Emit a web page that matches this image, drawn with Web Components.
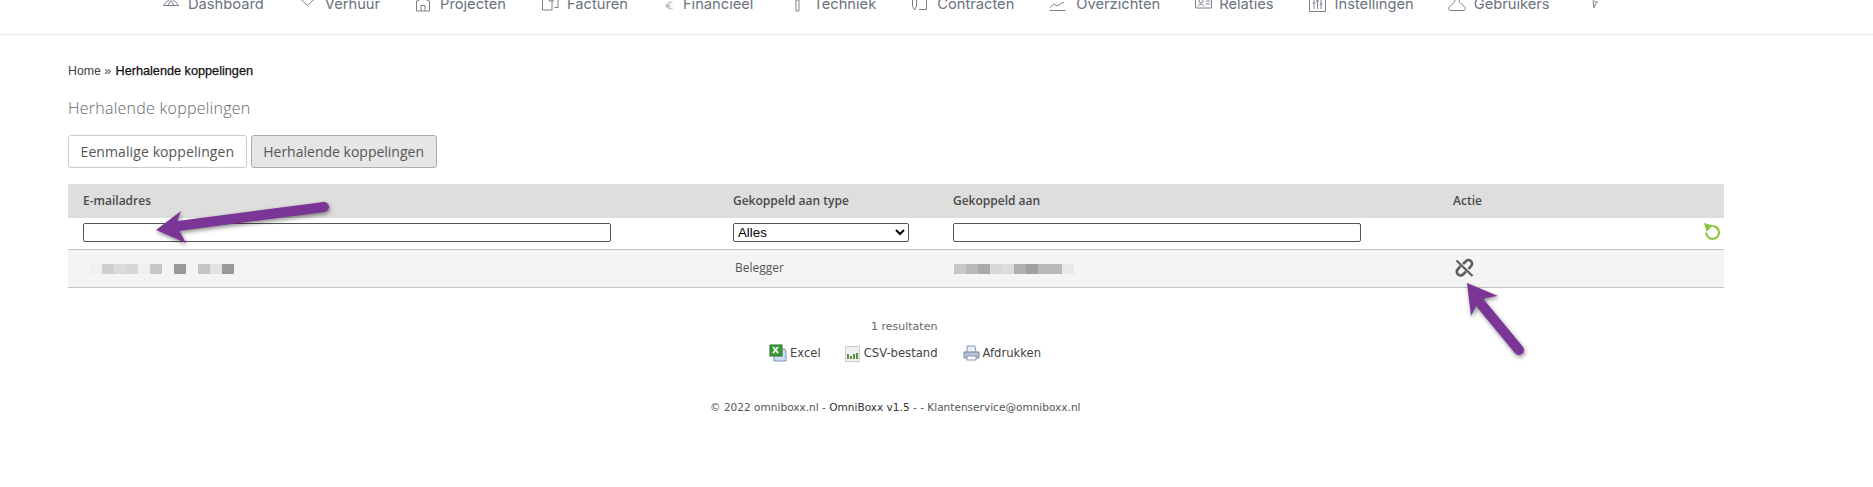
<!DOCTYPE html>
<html><head><meta charset="utf-8">
<style>
html,body{margin:0;padding:0;background:#fff;}
body{width:1873px;height:487px;overflow:hidden;position:relative;font-family:"Open Sans",sans-serif;}
</style></head>
<body>
<app-page></app-page>
<template id="nav-tpl">
<style>
:host{display:block;height:34px;border-bottom:1px solid #e8e9eb;overflow:hidden;}
.row{display:flex;margin-top:-6px;padding-left:163px;gap:35px;}
</style>
<div class="row"><slot></slot></div>
</template>
<template id="nav-item-tpl">
<style>
:host{display:flex;align-items:center;gap:9px;height:20px;font:14.7px/20px Inter,sans-serif;color:#6b7280;white-space:nowrap;}
::slotted(svg){flex:none;fill:none;stroke:#7c828d;stroke-width:1;overflow:visible;}
</style>
<slot name="icon"></slot><slot></slot>
</template>
<template id="tab-tpl">
<style>
:host{display:block;box-sizing:border-box;height:33px;padding:0 11.5px;border:1px solid #ccc;border-radius:3px;background:#fff;color:#555;font:14px/31px "Open Sans",sans-serif;letter-spacing:.1px;white-space:nowrap;}
:host([active]){background:#e6e6e6;border-color:#adadad;letter-spacing:0;}
</style><slot></slot>
</template>
<template id="mosaic-tpl">
<style>:host{display:flex;height:10px;margin-top:1px;}i{display:block;width:12px;height:10px;}</style>
</template>
<template id="grid-row-tpl">
<style>
:host{display:grid;grid-template-columns:650px 220px 500px 286px;box-sizing:border-box;align-items:center;}
</style><slot></slot>
</template>
<template id="cell-tpl">
<style>:host{display:block;padding-left:15px;position:relative;}</style><slot></slot>
</template>
<script>
function tplClass(id, setup){
  return class extends HTMLElement{
    constructor(){super();const r=this.attachShadow({mode:'open'});r.appendChild(document.getElementById(id).content.cloneNode(true));if(setup)setup(this,r);}
  };
}
customElements.define('top-nav',tplClass('nav-tpl'));
customElements.define('nav-item',tplClass('nav-item-tpl'));
customElements.define('tab-button',tplClass('tab-tpl'));
customElements.define('grid-row',tplClass('grid-row-tpl'));
customElements.define('grid-cell',tplClass('cell-tpl'));
customElements.define('blur-mosaic',tplClass('mosaic-tpl',(el,r)=>{
  (el.getAttribute('cells')||'').split(',').forEach(c=>{const i=document.createElement('i');i.style.background=c;r.appendChild(i);});
}));
const ic=(w,body,dx=0)=>`<svg slot="icon" width="${w}" height="16" viewBox="0 0 ${w} 16"><g transform="translate(${dx} 0)">${body}</g></svg>`;
class AppPage extends HTMLElement{
  constructor(){
    super();
    const r=this.attachShadow({mode:'open'});
    r.innerHTML=`<style>
:host{display:block;}
main{padding:0 149px 0 68px;}
.crumb{margin-top:28px;font:12.3px/16px "Liberation Sans",Arial,sans-serif;color:#444;}
.crumb b{font-weight:400;color:#111;-webkit-text-stroke:.25px #111;font-size:12.7px;margin-left:1px;}
h1{margin:18px 0 0;font:300 16px/22px "Open Sans",sans-serif;color:#666;letter-spacing:.25px;}
.tabs{display:flex;gap:4px;margin-top:16px;}
.table{margin-top:16px;width:1656px;font:12px/16px "Open Sans",sans-serif;color:#555;}
.head{background:#dedede;height:34px;color:#4a4a4a;font-weight:600;}
.filter{height:31px;}
input,select{display:block;box-sizing:border-box;height:19px;background:#fff;border:1px solid #555;border-radius:2px;margin:0;padding:0 1px;font:13.3px "Liberation Sans",Arial,sans-serif;color:#000;outline:none;}
.e{width:528px;margin-top:-2px;}.s{width:176px;margin-top:-2px;padding:0;}.g{width:408px;margin-top:-2px;}
.reset{display:flex;justify-content:flex-end;padding-right:3px;margin-top:-4px;}
.row{height:39px;background:#f4f4f4;border-top:1px solid #c4c4c4;border-bottom:1px solid #c4c4c4;}
.m1{margin-left:7px;}
.m2{margin-left:1px;}
.bel{padding-left:2px;margin-top:-2px;}
.act{margin-left:2px;margin-top:-2px;display:block;}
.res{margin-top:31px;padding-left:803px;font:11px/16px "DejaVu Sans",sans-serif;color:#666;}
.links{margin-top:9px;display:flex;padding-left:701px;color:#444;font:11.6px/18px "DejaVu Sans",sans-serif;}
.links span{display:flex;align-items:center;gap:3px;}
.foot{margin-top:37px;padding-left:642px;font:10.55px/16px "DejaVu Sans",sans-serif;color:#555;white-space:nowrap;}
.foot b{font-weight:400;color:#333;}
.arrows{position:absolute;left:0;top:0;pointer-events:none;filter:drop-shadow(1px 2px 2px rgba(0,0,0,.45));}
</style>
<top-nav>
<nav-item>${ic(16,'<path d="M.5 9.500h15M.5 9.500l3-4M15.500 9.500l-3-4M5 9.500l3-5 3 5M3.500 5.500 6 4.500M12.500 5.500 10 4.500"/>')}Dashboard</nav-item>
<nav-item>${ic(17,'<path d="M.5 3l7 6.500 7-6.500"/>',1)}Verhuur</nav-item>
<nav-item>${ic(16,'<path d="M.5 5v10h13V5M5 15V9.500h4V15M.5 5l3-1M13.500 5l-3-1"/>',1)}Projecten</nav-item>
<nav-item>${ic(17,'<path d="M.5 0v14h9.500V3M10 5h2M16 3v8.500h-3.500M7 0v5h3"/>',1)}Facturen</nav-item>
<nav-item>${ic(11,'<path style="stroke:#a8acb3" d="M7.500 6.500a3.500 3.500 0 1 0 0 6M.5 9h5M.5 10.800h5"/>',2)}Financieel</nav-item>
<nav-item>${ic(16,'<path d="M7 4v11h3V4z"/>',1)}Techniek</nav-item>
<nav-item>${ic(17,'<path d="M1.500 0v10l2 4 2-4V0M8 13.500h7.500V2"/>')}Contracten</nav-item>
<nav-item>${ic(18,'<path d="M.5 14.500h16M1 11.500l4-3.500 3 2 7-4"/>')}Overzichten</nav-item>
<nav-item>${ic(15,'<path d="M.5 0v12h16V0M3 10.500c0-3 6-3 6 0M11 5h4M11 8h4"/><circle cx="6" cy="5" r="2"/>')}Relaties</nav-item>
<nav-item>${ic(17,'<path d="M.5 0v15.500h16V0M5 2v11M8.500 2v11M12 2v11M3.500 7h3M7 5h3M10.500 8h3"/>')}Instellingen</nav-item>
<nav-item>${ic(16,'<path d="M6.500 0c0 4 1 6-1 7L1 11.500C0 12.500 1 14.500 2 14.500h14c1 0 2-2 1-3L12.500 7c-2-1-1-3-1-7"/>',-1)}Gebruikers</nav-item>
<nav-item>${ic(14,'<path d="M7.500 1 3 4.500l1 7.500 1.500-4 2-2-3-.5"/>',5)}</nav-item>
</top-nav>
<main>
<div class="crumb">Home » <b>Herhalende koppelingen</b></div>
<h1>Herhalende koppelingen</h1>
<div class="tabs"><tab-button>Eenmalige koppelingen</tab-button><tab-button active>Herhalende koppelingen</tab-button></div>
<div class="table">
<grid-row class="head"><grid-cell>E-mailadres</grid-cell><grid-cell>Gekoppeld aan type</grid-cell><grid-cell>Gekoppeld aan</grid-cell><grid-cell>Actie</grid-cell></grid-row>
<grid-row class="filter">
<grid-cell><input class="e" type="text"></grid-cell>
<grid-cell><select class="s"><option>Alles</option></select></grid-cell>
<grid-cell><input class="g" type="text"></grid-cell>
<grid-cell><div class="reset"><svg width="17" height="17" viewBox="0 0 17 17" fill="none"><path d="M8.600 3a6.400 6.400 0 1 1-6.400 6.400" stroke="#8cc63f" stroke-width="2.200"/><path d="M0 0l9 2.500L2.500 9z" fill="#8cc63f"/></svg></div></grid-cell>
</grid-row>
<grid-row class="row">
<grid-cell><blur-mosaic class="m1" cells="#f0f0f0,#cfcfcf,#dadada,#d6d6d6,#f0f0f0,#c8c8c8,#f4f4f4,#999,#f4f4f4,#c4c4c4,#e2e2e2,#999"></blur-mosaic></grid-cell>
<grid-cell><div class="bel">Belegger</div></grid-cell>
<grid-cell><blur-mosaic class="m2" cells="#c8c8c8,#b8b8b8,#aaa,#d8d8d8,#ddd,#b0b0b0,#a0a0a0,#b8b8b8,#b8b8b8,#e8e8e8"></blur-mosaic></grid-cell>
<grid-cell><svg class="act" width="19" height="20" viewBox="0 0 19 20" fill="none" stroke="#5c5c5c" stroke-width="2.600"><path d="M1.500 2.500l16 15.500" stroke-width="2.200"/><path d="M8 6 11 3.200A3.500 3.500 0 0 1 16 8.200L13.500 11M5.500 8 3 11A3.500 3.500 0 0 0 8 16.500L11 13.500"/></svg></grid-cell>
</grid-row>
</div>
<div class="res">1 resultaten</div>
<div class="links">
<span><svg width="18" height="18" viewBox="0 0 18 18"><path d="M5 5h11l1 2v10H5z" fill="#cfdcf0" stroke="#7c93b8"/><rect x="1" y="1" width="12" height="11" fill="#3d9a3d" stroke="#2c6e2c"/><path d="M4 3l5 6M9 3L4 9" stroke="#fff" stroke-width="1.500"/></svg>Excel</span>
<span style="margin-left:24px;gap:4px"><svg width="15" height="18" viewBox="0 0 15 18"><rect x=".5" y="2.500" width="14" height="15" fill="#f0f0f0" stroke="#ccc"/><path d="M3 10v5M6 12v3M9 10v5M12 9v6" stroke="#5e8f4a" stroke-width="2"/></svg>CSV-bestand</span>
<span style="margin-left:25px"><svg width="17" height="18" viewBox="0 0 17 18"><path d="M4 8V2h8l1 6" fill="#e8eef8" stroke="#8c99b0"/><path d="M1 8h15v6H1z" fill="#b8c2d4" stroke="#7b879c"/><rect x="4" y="12" width="9" height="4" fill="#fff" stroke="#8c99b0"/></svg>Afdrukken</span>
</div>
<div class="foot">© 2022 omniboxx.nl - <b>OmniBoxx v1.5</b> - - Klantenservice@omniboxx.nl</div>
</main>
<svg class="arrows" width="1873" height="487" viewBox="0 0 1873 487">
<path d="M324 207 178 226" stroke="#7a3597" stroke-width="10" stroke-linecap="round" fill="none"/>
<path d="M156 230 181 211 177 222 180 232 186 243z" fill="#7a3597"/>
<path d="M1519 350 1481 304" stroke="#7a3597" stroke-width="10" stroke-linecap="round" fill="none"/>
<path d="M1467 283 1498 296 1486 298 1477 304 1471 316z" fill="#7a3597"/>
</svg>`;
  }
}
customElements.define('app-page',AppPage);
</script>
</body></html>
